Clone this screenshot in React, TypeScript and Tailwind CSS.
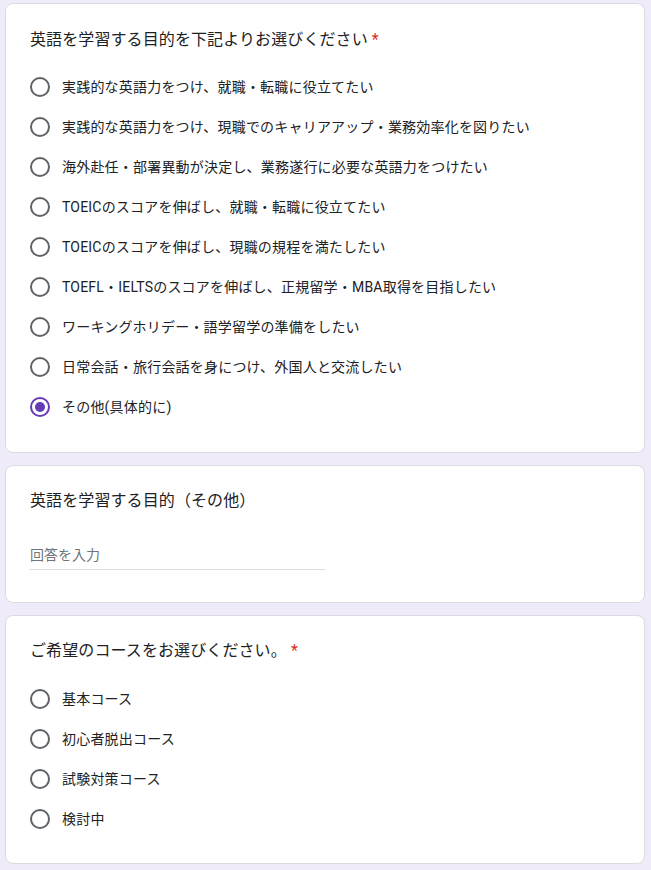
const purposes = [
  '実践的な英語力をつけ、就職・転職に役立てたい',
  '実践的な英語力をつけ、現職でのキャリアアップ・業務効率化を図りたい',
  '海外赴任・部署異動が決定し、業務遂行に必要な英語力をつけたい',
  'TOEICのスコアを伸ばし、就職・転職に役立てたい',
  'TOEICのスコアを伸ばし、現職の規程を満たしたい',
  'TOEFL・IELTSのスコアを伸ばし、正規留学・MBA取得を目指したい',
  'ワーキングホリデー・語学留学の準備をしたい',
  '日常会話・旅行会話を身につけ、外国人と交流したい',
  'その他(具体的に)',
];

const courses = ['基本コース', '初心者脱出コース', '試験対策コース', '検討中'];

function Radio({ label, checked }: { label: string; checked?: boolean }) {
  return (
    <div className="flex h-10 items-center">
      <div
        className={
          'flex h-5 w-5 shrink-0 items-center justify-center rounded-full border-2 ' +
          (checked ? 'border-[#673ab7]' : 'border-[#5f6368]')
        }
      >
        {checked && <div className="h-2.5 w-2.5 rounded-full bg-[#673ab7]" />}
      </div>
      <span className="ml-3 text-[14px] leading-5 tracking-[0.2px] text-[#202124]">{label}</span>
    </div>
  );
}

function Card({ children }: { children: React.ReactNode }) {
  return (
    <div className="ml-[5px] w-[640px] rounded-lg border border-[#dadce0] bg-white px-6">{children}</div>
  );
}

export default function App() {
  const selected = 8; // その他 が選択済み

  return (
    <div
      className="min-h-[870px] bg-[#f0ebf8] pt-[3px] pb-4"
      style={{ fontFamily: 'Roboto, "Noto Sans CJK JP", Arial, sans-serif' }}
    >
      <div className="flex flex-col gap-3">
        {/* 目的 */}
        <Card>
          <div className="pt-6 pb-[15px] text-[16px] leading-6 tracking-[0.1px] text-[#202124]">
            英語を学習する目的を下記よりお選びください<span className="ml-1 text-[#d93025]">*</span>
          </div>
          <div className="pb-[25px]">
            {purposes.map((p, i) => (
              <Radio key={p} label={p} checked={i === selected} />
            ))}
          </div>
        </Card>

        {/* その他 */}
        <Card>
          <div className="pt-[23px] text-[16px] leading-6 tracking-[0.1px] text-[#202124]">
            英語を学習する目的（その他）
          </div>
          <div className="pt-8 pb-[32px]">
            <div className="w-[295px] border-b border-[#dadce0] pb-[4px] text-[14px] leading-5 text-[#70757a]">
              回答を入力
            </div>
          </div>
        </Card>

        {/* コース */}
        <Card>
          <div className="pt-[23px] pb-4 text-[16px] leading-6 tracking-[0.1px] text-[#202124]">
            ご希望のコースをお選びください。 <span className="text-[#d93025]">*</span>
          </div>
          <div className="pb-6">
            {courses.map((c) => (
              <Radio key={c} label={c} />
            ))}
          </div>
        </Card>
      </div>
    </div>
  );
}
